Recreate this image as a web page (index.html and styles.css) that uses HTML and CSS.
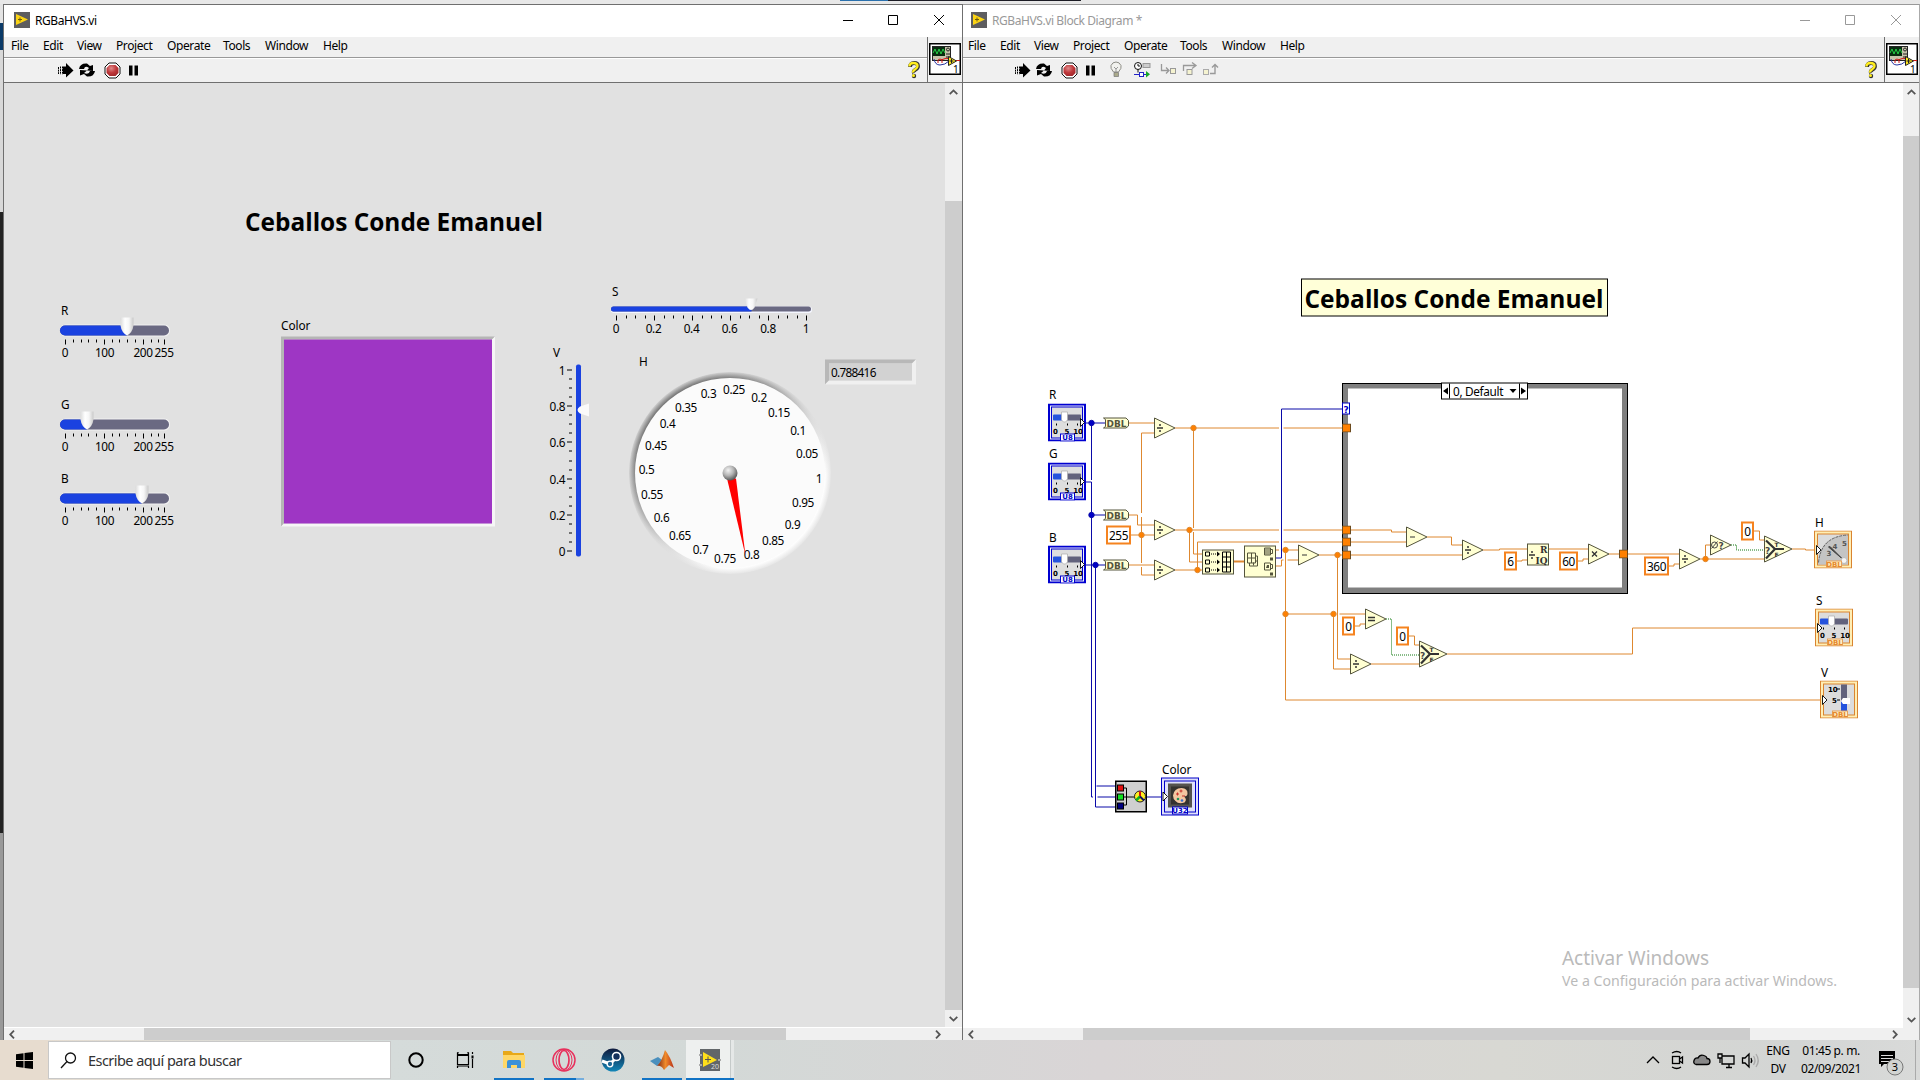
FILE: index.html
```html
<!DOCTYPE html>
<html lang="es">
<head>
<meta charset="utf-8">
<title>RGBaHVS.vi</title>
<link rel="stylesheet" href="styles.css">
</head>
<body>
<svg class="defs" width="0" height="0" aria-hidden="true">
  <defs>
    <linearGradient id="knobFill" x1="0" x2="1"><stop offset="0" stop-color="#dcdcdc"/><stop offset=".35" stop-color="#fff"/><stop offset=".65" stop-color="#f6f6f6"/><stop offset="1" stop-color="#c9c9c9"/></linearGradient>
    <linearGradient id="ringFill" x1=".15" y1=".1" x2=".85" y2=".9"><stop offset="0" stop-color="#666"/><stop offset=".3" stop-color="#989898"/><stop offset=".55" stop-color="#d8d8d8"/><stop offset=".8" stop-color="#fff"/><stop offset="1" stop-color="#fff"/></linearGradient>
    <radialGradient id="ringFade"><stop offset=".93" stop-color="#e1e1e1" stop-opacity="0"/><stop offset="1" stop-color="#e1e1e1"/></radialGradient>
    <radialGradient id="hubFill" cx=".38" cy=".32" r=".7"><stop offset="0" stop-color="#f2f2f2"/><stop offset=".5" stop-color="#b5b5b5"/><stop offset="1" stop-color="#555"/></radialGradient>
    <radialGradient id="stopFill" cx=".4" cy=".3" r=".8"><stop offset="0" stop-color="#de8b8b"/><stop offset=".5" stop-color="#c03a3d"/><stop offset="1" stop-color="#9c2428"/></radialGradient>
    <linearGradient id="steamFill" x1="0" y1="0" x2="0" y2="1"><stop offset="0" stop-color="#101a3c"/><stop offset="1" stop-color="#1387b8"/></linearGradient>
    <linearGradient id="matFill" x1="0" x2="1"><stop offset="0" stop-color="#7a2515"/><stop offset=".5" stop-color="#f08b2a"/><stop offset="1" stop-color="#b8301a"/></linearGradient>
    <pattern id="checker" width="2" height="2" patternUnits="userSpaceOnUse"><rect width="2" height="2" fill="#fff"/><rect width="1" height="1"/><rect x="1" y="1" width="1" height="1"/></pattern>

    <symbol id="appIcon" viewBox="0 0 16 16"><rect width="16" height="16" fill="#5d5d5f"/><path d="M2 2L14 7.500L2 13Z" fill="#fbd414"/><path d="M4 7.500h4M6 5.500v4" stroke="#6b5a10" stroke-width="1"/></symbol>
    <symbol id="tools" viewBox="0 0 90 24">
      <path d="M.5 9v7M2.500 8.500v8M4.500 8.500v8" stroke="#000" fill="none" stroke-dasharray="2 .6"/>
      <path d="M5 8.500h3V5l7.500 7.500L8 19.500v-3.500H5Z"/>
      <path d="M21 11q1-6 8-5.500l3 2.500 3-1v6l-6-.5 2-2.500q-4-3-5 1ZM37 13q-1 6-8 5.500l-3-2.500-4 1.500V12l7 .5-3 2.500q5 2 6-2Z"/>
      <path d="M51 5h7l4 4v7l-4 4h-7l-4-4V9Z" fill="#fff" stroke="#111"/><path d="M51.500 7h6l3 3v5l-3 3h-6l-3-3v-5Z" fill="url(#stopFill)"/>
      <path d="M71 7.500h3.500v10H71ZM76.500 7.500H80v10h-3.500Z"/>
    </symbol>
    <symbol id="help" viewBox="0 0 14 18"><path d="M3 6q0-4 4-4t4 3.200q0 2-2.500 3.500T7 12" fill="none" stroke="#333" stroke-width="3.800"/><circle cx="7" cy="15" r="2.200" fill="#333"/><path d="M2.500 5.500q0-3.500 4-3.500t4 3q0 2-2.500 3.500T6.500 11.500" fill="none" stroke="#ffee1f" stroke-width="2.400"/><circle cx="6.500" cy="14.500" r="1.500" fill="#ffee1f"/></symbol>
    <symbol id="viIcon" viewBox="0 0 32 32">
      <rect x=".75" y=".75" width="30.500" height="30.500" fill="#fff" stroke="#000" stroke-width="1.500"/>
      <rect x="3.500" y="3.500" width="18" height="14" fill="#c7c3ab" stroke="#222"/><rect x="4" y="4" width="12" height="9" fill="#082c10"/><path d="M4 10l2-4 2 5 2-5 2 5 2-5 2 4" fill="none" stroke="#25d045"/>
      <circle cx="19" cy="6.500" r="1.500" fill="none" stroke="#222"/><path d="M17 11h4M17 14h4" stroke="#222"/>
      <path d="M5 16q1 6 6 6 5 0 9-4" fill="none" stroke="#2533a0"/><path d="M9 20q-1-4 2-4t2 4M12 17q5-3 10-1M27 17.500h4" fill="none" stroke="#d01818"/>
      <path d="M19.500 13.500v9l8-4.500Z" fill="#ffe81f" stroke="#222"/><path d="M20.500 18h4M22.500 16v4" stroke="#222"/>
      <text x="24" y="29.500" class="tiny">1</text>
    </symbol>
    <symbol id="winButtons" viewBox="0 0 104 12"><path d="M0 6.500h10M45.500 1.500h9v9h-9ZM91 1l10 10M101 1L91 11" fill="none" stroke="currentColor"/></symbol>

    <symbol id="knob" viewBox="0 0 14 18" overflow="visible"><path d="M.5 0h13v8q-1 7-6.500 10Q1.500 15 .5 8Z" fill="url(#knobFill)"/></symbol>
    <symbol id="rgbSlider" viewBox="0 0 120 50" overflow="visible">
      <rect x="0" y="-1" width="110" height="12" rx="5.500" fill="#fff" opacity=".55"/><rect width="109" height="10" rx="5" fill="#6a6982"/>
      <path d="M5.500 14v5M44.500 14v5M83.500 14v5M104.500 14v5" stroke="#000"/>
      <path d="M13.500 14v3M21.500 14v3M28.500 14v3M36.500 14v3M52.500 14v3M59.500 14v3M67.500 14v3M75.500 14v3M91.500 14v3M98.500 14v3" stroke="#000"/>
      <g class="lbl mid"><text x="5" y="31">0</text><text x="44.500" y="31">100</text><text x="83" y="31">200</text><text x="104" y="31">255</text></g>
    </symbol>

    <symbol id="tri" viewBox="0 0 22 22" overflow="visible"><path d="M.5 .5v20L21 10.500Z" fill="#ffffd2" stroke="#54543c"/></symbol>
    <symbol id="div" viewBox="0 0 22 22" overflow="visible"><use href="#tri"/><path d="M3 10.500h6M5 7.500h2M5 13.500h2" stroke="#333" stroke-width="1.400"/></symbol>
    <symbol id="sub" viewBox="0 0 22 22" overflow="visible"><use href="#tri"/><path d="M4 10.500h5" stroke="#333"/></symbol>
    <symbol id="mul" viewBox="0 0 22 22" overflow="visible"><use href="#tri"/><path d="M4 8l5 5M9 8l-5 5" stroke="#333" stroke-width="1.300"/></symbol>
    <symbol id="eq" viewBox="0 0 22 22" overflow="visible"><use href="#tri"/><path d="M3 9h7M3 12h7" stroke="#333" stroke-width="1.600"/></symbol>
    <symbol id="nan" viewBox="0 0 22 22" overflow="visible"><use href="#tri"/><ellipse cx="4.500" cy="10.500" rx="3" ry="3" fill="none" stroke="#444"/><path d="M1.500 14l6-7" stroke="#444"/><text x="8.500" y="14" class="sym">?</text></symbol>
    <symbol id="sel" viewBox="0 0 28 28" overflow="visible"><path d="M.5 .5v26L28 13.500Z" fill="#ffffd2" stroke="#54543c"/><path d="M2 5l9 8.500M2 23l9-9.500M10 13.500h10" stroke="#333" stroke-width="2.200"/><text x="1" y="18" class="sym">?</text><text x="10.500" y="11" class="micro">T</text><text x="10.500" y="21" class="micro">F</text></symbol>
    <symbol id="dbl" viewBox="0 0 26 12" overflow="visible"><path d="M.5 .5H23l2.500 2.500v5.500L23 10.500H.5L2.500 9V2Z" fill="#ffffd2" stroke="#54543c"/><text x="3.500" y="9.300" class="dbl" textLength="20" lengthAdjust="spacingAndGlyphs">DBL</text></symbol>
    <symbol id="tunnel" viewBox="0 0 9 9"><rect x=".5" y=".5" width="8" height="8" fill="#ff8000" stroke="#6b4a1e"/></symbol>
    <symbol id="sliderArt" viewBox="0 0 38 38">
      <rect x="5" y="11" width="12" height="6" rx="1" fill="#2553dd"/><rect x="16" y="11" width="17" height="6" rx="1" fill="#62627c"/><path d="M13.500 8.500h6v8l-2 2h-2l-2-2Z" fill="#fff" stroke="#aaa" stroke-width=".7"/>
      <path d="M8.500 20v2M19.500 20v2M29.500 20v2" stroke="#000"/><g class="ico mid"><text x="7.500" y="30">0</text><text x="19" y="30">5</text><text x="30" y="30">10</text></g>
    </symbol>
    <symbol id="control" viewBox="0 0 38 38">
      <rect x="1" y="1" width="36" height="36" fill="#f0f0fa" stroke="#0000d0" stroke-width="2"/><rect x="3.500" y="3.500" width="31" height="31" fill="#dedede" stroke="#0000d0"/>
      <use href="#sliderArt" width="38" height="38"/>
      <path d="M32.500 15v8l4-4Z" fill="#fff" stroke="#000" stroke-width=".9"/><rect x="12.500" y="30.500" width="14" height="7" fill="#fff" stroke="#0000d0"/><text x="19.500" y="36.800" class="ico mid blue">U8</text>
    </symbol>
    <symbol id="indicator" viewBox="0 0 38 38"><rect x=".5" y=".5" width="37" height="37" fill="#ffeeb4" stroke="#d98430"/><rect x="3.500" y="3.500" width="31" height="31" fill="#dcdcdc" stroke="#d98430"/></symbol>
    <symbol id="indicatorTag" viewBox="0 0 38 38"><rect x="12.500" y="30.500" width="15" height="6" fill="#fff0c0" stroke="#e6a05c"/><text x="20" y="36.300" class="ico mid orange">DBL</text><path d="M2.500 15v9l4.500-4.500Z" fill="#fff" stroke="#000" stroke-width=".9"/></symbol>
  </defs>
</svg>

<div class="desktop">
  <div class="behind"></div>
  <main class="windows">
    <section class="window front">
      <header class="titlebar">
        <svg width="16" height="16"><use href="#appIcon"/></svg>
        <span class="title">RGBaHVS.vi</span>
        <svg class="winbtns" width="104" height="12"><use href="#winButtons"/></svg>
      </header>
      <div class="chrome">
        <div class="bars">
          <nav class="menu"><span>File</span><span>Edit</span><span>View</span><span>Project</span><span>Operate</span><span>Tools</span><span>Window</span><span>Help</span></nav>
          <div class="toolbar"><svg width="90" height="24"><use href="#tools"/></svg><svg class="help" width="14" height="18"><use href="#help"/></svg></div>
        </div>
        <div class="vi"><svg width="32" height="32"><use href="#viIcon"/></svg></div>
      </div>
      <div class="work">
        <svg class="canvas" viewBox="4 83 941 943">
          <text x="245" y="230.500" class="heading" textLength="298" lengthAdjust="spacingAndGlyphs">Ceballos Conde Emanuel</text>
          <g class="lbl"><text x="61" y="314">R</text><text x="61" y="408">G</text><text x="61" y="482">B</text><text x="281" y="329" textLength="29">Color</text><text x="612" y="295">S</text><text x="553" y="356">V</text><text x="639" y="365">H</text></g>
          <use href="#rgbSlider" x="60" y="325" width="120" height="50"/><path d="M65 325h62v10h-62a5 5 0 0 1 0-10Z" fill="#1a42e0"/><use href="#knob" x="120" y="317" width="14" height="18"/>
          <use href="#rgbSlider" x="60" y="419" width="120" height="50"/><path d="M65 419h22v10h-22a5 5 0 0 1 0-10Z" fill="#1a42e0"/><use href="#knob" x="80" y="411" width="14" height="18"/>
          <use href="#rgbSlider" x="60" y="493" width="120" height="50"/><path d="M65 493h77v10h-77a5 5 0 0 1 0-10Z" fill="#1a42e0"/><use href="#knob" x="135" y="485" width="14" height="18"/>

          <path d="M281 336h214l-3 3h-208v184l-3 3Z" fill="#b5b5b5"/><path d="M495 336v190h-214l3-3h208v-184Z" fill="#f6f6f6"/><rect x="284" y="339" width="208" height="184" fill="#9e36c4"/>

          <rect x="611" y="306" width="201" height="6.500" rx="3" fill="#f4f6ff"/><rect x="611" y="306" width="200" height="5" rx="2.500" fill="#6a6982"/><path d="M613.500 306h138v5h-138a2.500 2.500 0 0 1 0-5Z" fill="#1a42e0"/><path d="M744.500 298h13l-3 9q-3.500 5-7 0Z" fill="url(#knobFill)"/>
          <path d="M616.500 315v5M654.500 315v5M692.500 315v5M730.500 315v5M768.500 315v5M806.500 315v5M626.500 315v3M635.500 315v3M645.500 315v3M664.500 315v3M673.500 315v3M683.500 315v3M702.500 315v3M711.500 315v3M721.500 315v3M740.500 315v3M749.500 315v3M759.500 315v3M778.500 315v3M787.500 315v3M797.500 315v3" stroke="#000"/>
          <g class="lbl mid"><text x="616" y="332">0</text><text x="653.500" y="332">0.2</text><text x="691.500" y="332">0.4</text><text x="729.500" y="332">0.6</text><text x="768" y="332">0.8</text><text x="806" y="332">1</text></g>

          <rect x="576" y="364" width="5" height="192" rx="2" fill="#1a42e0"/><path d="M589 403v13l-9-3q-5-3.500 0-7Z" fill="#fafafa"/>
          <path d="M567 369.500h5M567 405.500h5M567 441.500h5M567 478.500h5M567 514.500h5M567 550.500h5M569 378.500h3M569 387.500h3M569 396.500h3M569 414.500h3M569 423.500h3M569 432.500h3M569 450.500h3M569 460.500h3M569 469.500h3M569 487.500h3M569 496.500h3M569 505.500h3M569 523.500h3M569 532.500h3M569 541.500h3" stroke="#000"/>
          <g class="lbl end"><text x="565" y="374">1</text><text x="565" y="410">0.8</text><text x="565" y="446">0.6</text><text x="565" y="483">0.4</text><text x="565" y="519">0.2</text><text x="565" y="555">0</text></g>

          <path d="M825 359h91l-4 4h-83v17l-4 4Z" fill="#b8b8b8"/><path d="M916 359v25h-91l4-4h83v-17Z" fill="#f0f0f0"/><rect x="829" y="363" width="83" height="17" fill="#d2d2d2"/><text x="831" y="376" class="lbl" textLength="45">0.788416</text>

          <circle cx="730" cy="472.500" r="101" fill="url(#ringFill)"/><circle cx="730" cy="472.500" r="102" fill="url(#ringFade)"/><circle cx="730" cy="472.500" r="95" fill="#fbfbfb"/>
          <g class="lbl mid"><text x="734" y="393">0.25</text><text x="708.500" y="397">0.3</text><text x="759" y="401">0.2</text><text x="686" y="411">0.35</text><text x="779" y="416">0.15</text><text x="667.500" y="427">0.4</text><text x="798" y="434">0.1</text><text x="656" y="449">0.45</text><text x="807" y="457">0.05</text><text x="646.500" y="473">0.5</text><text x="819" y="482">1</text><text x="652" y="498">0.55</text><text x="803" y="506">0.95</text><text x="661.500" y="521">0.6</text><text x="792.500" y="528">0.9</text><text x="680" y="539">0.65</text><text x="773" y="544">0.85</text><text x="700.500" y="553.500">0.7</text><text x="751.500" y="558">0.8</text><text x="725" y="562">0.75</text></g>
          <path d="M727 478h9L745.500 555Z" fill="#f00"/><circle cx="730" cy="472.500" r="7.500" fill="url(#hubFill)"/>
        </svg>
        <div class="vscroll"><svg width="9" height="6" viewBox="0 0 9 6"><path d="M.7 5.200L4.500 1.400l3.800 3.800"/></svg><i></i><svg width="9" height="6" viewBox="0 0 9 6"><path d="M.7 .8l3.800 3.800L8.300 .8"/></svg></div>
      </div>
      <div class="hscroll"><svg width="6" height="9" viewBox="0 0 6 9"><path d="M5 .7L1.200 4.500 5 8.300"/></svg><i></i><svg width="6" height="9" viewBox="0 0 6 9"><path d="M1 .7l3.800 3.800L1 8.300"/></svg></div>
    </section>

    <section class="window diagram">
      <header class="titlebar">
        <svg width="16" height="16"><use href="#appIcon"/></svg>
        <span class="title">RGBaHVS.vi Block Diagram *</span>
        <svg class="winbtns" width="104" height="12"><use href="#winButtons"/></svg>
      </header>
      <div class="chrome">
        <div class="bars">
          <nav class="menu"><span>File</span><span>Edit</span><span>View</span><span>Project</span><span>Operate</span><span>Tools</span><span>Window</span><span>Help</span></nav>
          <div class="toolbar"><svg width="90" height="24"><use href="#tools"/></svg>
            <svg width="110" height="18" viewBox="0 0 110 18">
              <path d="M3.500 11Q0 7 1 4.500 2.500 1 6 1t5 3.500Q12 7 8.500 11Z" fill="#f2f2ee" stroke="#8d8d86"/><path d="M4 6l2 2 2-2M6 8v3" fill="none" stroke="#999"/><path d="M4 11.500h4.500v4H4Z" fill="#aaa98a" stroke="#777" stroke-width=".7"/>
              <circle cx="28" cy="5" r="3.500" fill="#fff" stroke="#111"/><path d="M28 3v2h2M28 8.500v3" stroke="#111" fill="none"/><rect x="33" y="2.500" width="7" height="4" fill="#ccc" stroke="#999"/><path d="M24 13.500h13" stroke="#2222c8"/><rect x="29.500" y="11.500" width="4" height="4" fill="#fff" stroke="#2222c8"/><path d="M36 10v6.500l4-3.300Z" fill="#18a828"/>
              <path d="M51.500 3v6.500h7M56 6.500l3 3-3 3" fill="none" stroke="#999" stroke-width="1.300"/><rect x="60.500" y="7.500" width="5" height="5" fill="#f5f3d0" stroke="#999"/>
              <path d="M73.500 10V4.500h12M82 1.500l4 3-4 3" fill="none" stroke="#999" stroke-width="1.300"/><rect x="77" y="8.500" width="5" height="5" fill="#f5f3d0" stroke="#999"/>
              <rect x="93.500" y="8.500" width="5" height="5" fill="#f5f3d0" stroke="#aaa"/><path d="M100 12.500h5V4M102 6.500l3-3 3 3" fill="none" stroke="#999" stroke-width="1.400"/>
            </svg>
            <svg class="help" width="14" height="18"><use href="#help"/></svg></div>
        </div>
        <div class="vi"><svg width="32" height="32"><use href="#viIcon"/></svg></div>
      </div>
      <div class="work">
        <svg class="canvas" viewBox="963 83 940 944">
          <rect x="1301.500" y="278.500" width="306" height="37" fill="#ffffd8" stroke="#000"/><text x="1304.500" y="307.500" class="heading" textLength="299" lengthAdjust="spacingAndGlyphs">Ceballos Conde Emanuel</text>

          <g shape-rendering="crispEdges"><rect x="1342" y="382" width="286" height="211" fill="url(#checker)"/><rect x="1342.500" y="382.500" width="285" height="210" fill="none" stroke="#000"/></g><rect x="1348" y="388" width="274" height="199" fill="#fff"/>
          <rect x="1441.500" y="382.500" width="86" height="16" fill="#fff" stroke="#000"/><path d="M1449.500 383v15M1519.500 383v15" stroke="#000"/><path d="M1448 387v7l-5-3.500ZM1521 387v7l5-3.500ZM1509.500 388.500h7l-3.500 4Z"/><text x="1453" y="395" class="lbl" textLength="50">0, Default</text>

          <g class="wire uint">
            <path d="M1084 422.500h22M1091.500 422.500v57M1091.500 484v301.500M1096.500 785.500h19M1084 481.500h7.500v33h14M1091.500 785v11.500h1.500M1097.500 796.500h18M1084 564.500h22M1095.500 564.500v242h20M1147 796.500h17M1276 557.500h5.500v-149h61"/>
            <g class="dots"><circle cx="1091.500" cy="422.500" r="2.700"/><circle cx="1091.500" cy="514.500" r="2.700"/><circle cx="1095.500" cy="564.500" r="2.700"/></g>
          </g>
          <g class="wire dbl-wire">
            <path d="M1129 422.500h26M1155 432.500h-13.500V512.500M1141.500 516.500v46M1141.500 566.500v8h13M1175 427.500h104M1283.500 427.500h60M1193.500 427.500v100M1193.500 531.500v22h9"/>
            <path d="M1129 514.500h8.500v10h17M1131 534.500h24M1175 529.500h104M1283.500 529.500h60M1189.500 529.500v32h13M1129 564.500h26M1175 569.500h27M1197.500 569.500v-28h81.500M1283.500 541.500h60"/>
            <path d="M1234 561h10" stroke-width="2"/>
            <path d="M1276 549.500h3M1283.500 549.500h15M1276 565.500h5.500v-6h2M1287.500 559.500h11M1285.500 549.500v150h535M1319 554.500h24M1337.500 554.500v104h13M1285.500 613.500h50M1339.500 613.500h26M1333.500 613.500v55h17"/>
            <path d="M1355 625.500h5v-2h5M1371 663.500h48M1409 635.500h5.500v9h5M1447 653.500h185.500v-26H1818"/>
            <path d="M1351 529.500h40.500v2h15M1351 541.500h55M1427 536.500h24.500v8h11M1351 554.500h111M1483 549.500h16.500v-1H1527M1517 560.500h5v-1h5M1549 548.500h39M1578 560.500h5v-2h5M1609 553.500h70M1669 565.500h5v-2h5M1700 558.500h64M1705.500 558.500v-14h5M1754 530.500h5.500v9h5M1792 548.500h13.500v1h12"/>
            <g class="dots"><circle cx="1193.500" cy="427.500" r="2.700"/><circle cx="1141.500" cy="534.500" r="2.700"/><circle cx="1189.500" cy="529.500" r="2.700"/><circle cx="1197.500" cy="569.500" r="2.700"/><circle cx="1285.500" cy="549.500" r="2.700"/><circle cx="1337.500" cy="554.500" r="2.700"/><circle cx="1285.500" cy="613.500" r="2.700"/><circle cx="1333.500" cy="613.500" r="2.700"/><circle cx="1705.500" cy="558.500" r="2.700"/></g>
          </g>
          <path class="bool" d="M1386 618.500h5.500v36h28M1731 544.500h5.500v5h28"/>

          <use href="#tunnel" x="1342" y="423" width="9" height="9"/><use href="#tunnel" x="1342" y="525" width="9" height="9"/><use href="#tunnel" x="1342" y="537" width="9" height="9"/><use href="#tunnel" x="1342" y="550" width="9" height="9"/><use href="#tunnel" x="1619" y="549" width="9" height="9"/>
          <rect x="1342.500" y="402.500" width="7" height="11" fill="#fff" stroke="#0000c0"/><text x="1346" y="412" class="sym mid blue">?</text>

          <use href="#dbl" x="1103" y="417" width="26" height="12"/><use href="#dbl" x="1103" y="509" width="26" height="12"/><use href="#dbl" x="1103" y="559" width="26" height="12"/>
          <use href="#div" x="1154" y="417" width="22" height="22"/><use href="#div" x="1154" y="519" width="22" height="22"/><use href="#div" x="1154" y="559" width="22" height="22"/><use href="#sub" x="1298" y="544" width="22" height="22"/><use href="#sub" x="1406" y="526" width="22" height="22"/><use href="#div" x="1462" y="539" width="22" height="22"/><use href="#mul" x="1588" y="543" width="22" height="22"/><use href="#div" x="1679" y="548" width="22" height="22"/><use href="#nan" x="1710" y="534" width="22" height="22"/><use href="#eq" x="1365" y="608" width="22" height="22"/><use href="#div" x="1350" y="653" width="22" height="22"/>
          <use href="#sel" x="1419" y="640" width="28" height="28"/><use href="#sel" x="1764" y="535" width="28" height="28"/>

          <g class="const"><rect x="1107" y="526" width="23" height="17"/><rect x="1505" y="552" width="11" height="17"/><rect x="1560" y="552" width="17" height="17"/><rect x="1645" y="557" width="23" height="17"/><rect x="1742" y="522" width="11" height="17"/><rect x="1343" y="617" width="11" height="17"/><rect x="1397" y="627" width="11" height="17"/></g>
          <g class="lbl mid"><text x="1118.500" y="539">255</text><text x="1510.500" y="565">6</text><text x="1568.500" y="565">60</text><text x="1656.500" y="570">360</text><text x="1747.500" y="535">0</text><text x="1348.500" y="630">0</text><text x="1402.500" y="640">0</text></g>

          <g class="node"><rect x="1202.500" y="549.500" width="31" height="24"/><rect x="1244.500" y="545.500" width="31" height="31"/><rect x="1527.500" y="543.500" width="21" height="21"/></g>
          <path d="M1205.500 551.500h4v4h-4ZM1205.500 559.500h4v4h-4ZM1205.500 567.500h4v4h-4ZM1222.500 551.500h8v20h-8ZM1226.500 551.500v20M1222.500 556.500h8M1222.500 561.500h8M1222.500 566.500h8" fill="none" stroke="#000"/><path d="M1211 553.500h6M1211 561.500h6M1211 569.500h6" stroke="#000" stroke-dasharray="1 1"/><path d="M1217 551v5l3-2.500ZM1217 559v5l3-2.500ZM1217 567v5l3-2.500Z"/>
          <path d="M1247.500 552.500h8v10h-8ZM1251.500 552.500v10M1247.500 557.500h8M1249.500 562.500v3h8v-10h-2M1253.500 562v3M1255 560.500h2" fill="none" stroke="#54543c"/><path d="M1264.500 547.500h6v7h-6ZM1264.500 562.500h6v7h-6ZM1270.500 549h2v4h-2M1270.500 564h2v4h-2" fill="none" stroke="#54543c"/><path d="M1265 548h5v6h-5Z" fill="#54543c" opacity=".55"/><path d="M1267 564.500h2v3h-3M1270 557h3v3h-3ZM1270 572h3v3h-3Z" fill="#54543c"/>
          <path d="M1529 554.500h6M1531 551.500h2M1531 557.500h2" stroke="#333" stroke-width="1.300"/><text x="1540" y="552.500" class="iq">R</text><text x="1535.500" y="563.500" class="iq" textLength="12" lengthAdjust="spacingAndGlyphs">IQ</text>

          <g class="lbl"><text x="1049" y="398">R</text><text x="1049" y="457">G</text><text x="1049" y="541">B</text><text x="1815" y="526">H</text><text x="1816" y="604">S</text><text x="1821" y="676">V</text><text x="1162" y="773" textLength="29">Color</text></g>
          <use href="#control" x="1048" y="403" width="38" height="38"/><use href="#control" x="1048" y="462" width="38" height="38"/><use href="#control" x="1048" y="545" width="38" height="38"/>

          <use href="#indicator" x="1814" y="530" width="38" height="38"/>
          <path d="M1818 562Q1820 535 1848 534.500V564H1818Z" fill="#c4c4c4"/><path d="M1818.500 562Q1821 536 1848 534.500" fill="none" stroke="#666" stroke-dasharray="3 1"/><path d="M1828.500 546.500l14 12-12.500-12.500Z" fill="#444" stroke="#444"/><circle cx="1844" cy="560" r="3" fill="#f5f5f5" stroke="#bbb"/><g class="ico mid dim"><text x="1829" y="555">3</text><text x="1835" y="548">4</text><text x="1844.500" y="545">5</text></g>
          <use href="#indicatorTag" x="1814" y="530" width="38" height="38"/>
          <use href="#indicator" x="1815" y="608" width="38" height="38"/><use href="#sliderArt" x="1815" y="607" width="38" height="38"/><use href="#indicatorTag" x="1815" y="608" width="38" height="38"/>
          <use href="#indicator" x="1820" y="680" width="38" height="38"/><rect x="1841" y="684" width="6" height="17" fill="#62627c"/><rect x="1841" y="701" width="6" height="10" fill="#2553dd"/><path d="M1850 697.500v6h-7l-2-3 2-3Z" fill="#fff"/><g class="ico"><text x="1828" y="691">10</text><text x="1832" y="702">5</text></g><path d="M1837 688.500h3M1837 699.500h3" stroke="#000"/><use href="#indicatorTag" x="1820" y="680" width="38" height="38"/>

          <rect x="1115.750" y="780.750" width="30.500" height="30.500" fill="#cfcfcf" stroke="#000" stroke-width="1.500"/><path d="M1123 787.500h3.500v17h-3.500M1123 796.500h12" fill="none" stroke="#000"/><g stroke="#000"><rect x="1117.500" y="784.500" width="6" height="6" fill="#e01010"/><rect x="1117.500" y="793.500" width="6" height="6" fill="#10e020"/><rect x="1117.500" y="802.500" width="6" height="6" fill="#000080"/></g>
          <circle cx="1140" cy="796" r="5.500" fill="#ffee20" stroke="#222"/><path d="M1140 796v-5.500" stroke="#d01010" stroke-width="2"/><path d="M1140 796l-4 4" stroke="#12b020" stroke-width="2.500"/><path d="M1140 796l4 4" stroke="#101060" stroke-width="2"/>
          <rect x="1161.500" y="777.500" width="37" height="37" fill="#dfe0fa" stroke="#0000c8"/><rect x="1164.500" y="780.500" width="31" height="31" fill="#dfe0fa" stroke="#0000c8"/><rect x="1168" y="783" width="24" height="24" fill="#55534f"/><rect x="1171" y="786" width="18" height="18" fill="#34322f"/>
          <path d="M1173 795q1-7.500 8.500-7.500 6.500 .5 6 6-.5 2.500-3.500 2.500 3.500 3 .5 6-6 2-9-1.500-2.500-2-2.500-5.500Z" fill="#f3c6a0"/><path d="M1176 793.500h3M1177.500 792v3M1179.500 790.500h3M1181 789v3M1182 795.500h3" stroke="#c8302a"/><circle cx="1178" cy="798.500" r="1.300" fill="#23955a"/><circle cx="1182" cy="800" r="1.300" fill="#346fd0"/>
          <path d="M1163 791.500v9l4.500-4.500Z" fill="#fff" stroke="#000" stroke-width=".9"/><rect x="1172.500" y="806.500" width="15" height="7" fill="#fff" stroke="#0000c8"/><text x="1180" y="812.800" class="ico mid blue">U32</text>

          <g class="watermark"><text x="1562" y="964.500" font-size="20" textLength="147" lengthAdjust="spacingAndGlyphs">Activar Windows</text><text x="1562" y="985.500" font-size="15" textLength="275" lengthAdjust="spacingAndGlyphs">Ve a Configuración para activar Windows.</text></g>
        </svg>
        <div class="vscroll"><svg width="9" height="6" viewBox="0 0 9 6"><path d="M.7 5.200L4.500 1.400l3.800 3.800"/></svg><i></i><svg width="9" height="6" viewBox="0 0 9 6"><path d="M.7 .8l3.800 3.800L8.300 .8"/></svg></div>
      </div>
      <div class="hscroll"><svg width="6" height="9" viewBox="0 0 6 9"><path d="M5 .7L1.200 4.500 5 8.300"/></svg><i></i><svg width="6" height="9" viewBox="0 0 6 9"><path d="M1 .7l3.800 3.800L1 8.300"/></svg></div>
    </section>
  </main>

  <footer class="taskbar">
    <div class="start"><svg width="17" height="17" viewBox="0 0 17 17"><path d="M0 2.300L7.500 1.300V8H0ZM8.500 1.100L17 0v8H8.500ZM0 9h7.500v6.700L0 14.700ZM8.500 9H17v8l-8.500-1.100Z"/></svg></div>
    <div class="search"><svg width="17" height="17" viewBox="0 0 17 17"><circle cx="10.500" cy="6" r="5" fill="none" stroke="#111" stroke-width="1.300"/><path d="M7 9.500L1 16" stroke="#111" stroke-width="1.300"/></svg><span>Escribe aquí para buscar</span></div>
    <div class="apps">
      <span class="app"><svg width="18" height="18" viewBox="0 0 18 18"><circle cx="9" cy="9" r="6.700" fill="none" stroke="#000" stroke-width="2"/></svg></span>
      <span class="app"><svg width="18" height="18" viewBox="0 0 18 18"><path d="M2 2.500V1M12 2.500V1M1.500 4.500h11v9h-11ZM1.500 1.500v2h11v-2M1.500 17v-2h11v2M16.500 1v2M16.500 8v9" fill="none" stroke="#000" stroke-width="1.200"/><rect x="15.500" y="4.500" width="2" height="3"/></svg></span>
      <span class="app run"><svg width="22" height="20" viewBox="0 0 22 20"><path d="M0 1h8l2 2h11v15H0Z" fill="#e8a818"/><path d="M0 5h22v13H0Z" fill="#ffd767"/><path d="M4 18v-6q0-2 2-2h10q2 0 2 2v6h-4v-3H8v3Z" fill="#3d91d8"/></svg></span>
      <span class="app run multi"><svg width="24" height="24" viewBox="0 0 24 24"><g fill="none" stroke="#e8305c"><circle cx="12" cy="12" r="11" stroke-width="1.500"/><ellipse cx="12" cy="12" rx="5" ry="9.500" stroke-width="1.700"/><ellipse cx="12" cy="12" rx="8" ry="10.500"/></g></svg></span>
      <span class="app"><svg width="24" height="24" viewBox="0 0 24 24"><circle cx="12" cy="12" r="11.500" fill="url(#steamFill)"/><path d="M1 13l8 3 7-7" fill="none" stroke="#fff" stroke-width="3"/><circle cx="15.500" cy="8.500" r="4" fill="#15315c" stroke="#fff" stroke-width="1.600"/><circle cx="9" cy="16" r="2.800" fill="#1c6796" stroke="#fff" stroke-width="1.300"/></svg></span>
      <span class="app run"><svg width="24" height="22" viewBox="0 0 24 22"><path d="M0 12l8-4 4 3-5 6Z" fill="#4a8fbd"/><path d="M7 17q5-5 8-16 5 6 9 18l-5-3-5 5q-3-5-7-4Z" fill="url(#matFill)"/></svg></span>
      <span class="app run active"><svg width="22" height="22" viewBox="0 0 22 22"><path d="M1 0h20v22H1Z" fill="#626669"/><path d="M0 6h3M0 16h3M19 11h3" stroke="#aaa" stroke-width="2"/><path d="M4 3l14 8L4 18Z" fill="#ffe01a"/><path d="M6 10.500h6M9 7.500v6" stroke="#555"/><text x="12" y="20" class="badge20">20</text></svg></span>
    </div>
    <div class="tray">
      <svg width="118" height="20" viewBox="0 0 118 20" fill="none" stroke="#000" stroke-width="1.300"><path d="M1 13l6-6 6 6"/><rect x="26.500" y="6.500" width="7" height="7"/><path d="M33.500 9l3-2v6l-3-2M26 3q5-3 9 0M26 17q5 3 9 0"/><path d="M50 14.500q-3-1-2-4 1-3 4-2.500 2-4 6-2.500 3 1 3 3 3 0 3 3t-3 3Z" fill="#888"/><path d="M76 6h12v8H76ZM80 17.500h6M83 14v3.500M72 4h4v4h-4ZM74 8v5" /><path d="M96.500 8v5h2.500l4 4V4l-4 4ZM105 8q1.500 2.500 0 5" /><path d="M107.500 6q3 4.500 0 9M110 4q4.500 6.500 0 13" stroke="#aaa"/></svg>
      <div class="stack lang"><span>ENG</span><span>DV</span></div>
      <div class="stack clock"><span>01:45 p. m.</span><span>02/09/2021</span></div>
      <svg class="notes" width="26" height="26" viewBox="0 0 26 26"><path d="M0 0h16v13H5l-3 3v-3H0Z"/><path d="M2 4.500h12M2 7.500h12M2 10.500h8" stroke="#ddd"/><circle cx="16" cy="16" r="8" fill="#d2d4d2" stroke="#777"/><text x="16" y="20" class="count">3</text></svg>
    </div>
  </footer>
</div>
</body>
</html>
```
FILE: styles.css
```css
* { box-sizing: border-box; }
body { margin: 0; font-family: "Noto Sans", "Open Sans", sans-serif; font-size: 12px; color: #000; overflow: hidden; }
svg { display: block; flex: none; }
.defs { position: absolute; }

.desktop { width: 1920px; height: 1080px; display: grid; grid-template-rows: 4px 1036px 40px; background: #dcdcdc; }
.behind { background: linear-gradient(90deg, transparent 840px, #2a70ad 840px, #2a70ad 888px, #1c1c24 888px, #1c1c24 1081px, transparent 1081px) 0 0 / 100% 1px no-repeat, #e8e8e8; }
.windows { display: grid; grid-template-columns: 960px 957px; padding-left: 3px; background: linear-gradient(#e4e4e4 19px, #0b3a68 19px, #0b3a68 46px, #d8d8d8 46px, #d8d8d8 208px, #222 208px, #222 80%, #999 80%); }

.window { display: grid; grid-template-rows: 32px 46px minmax(0, 1fr) 13px; border-top: 1px solid #6f6f6f; background: #f0f0f0; }
.front { border-left: 1px solid #6f6f6f; border-right: 1px solid #6f6f6f; }
.diagram { border-right: 1px solid #aaa; border-top-color: #999; }

.titlebar { display: flex; align-items: center; padding: 0 18px 2px 10px; background: #fff; }
.title { margin-left: 5px; letter-spacing: -.42px; }
.diagram .title { color: #999; }
.diagram .titlebar { padding: 0 18px 2px 8px; color: #999; }
.winbtns { margin-left: auto; margin-right: -3px; }

.chrome { display: grid; grid-template-columns: minmax(0, 1fr) 35px; border-bottom: 1px solid #6f6f6f; }
.bars { display: grid; grid-template-rows: 21px 24px; }
.menu { display: grid; grid-template-columns: 32px 34px 39px 51px 56px 42px 58px 30px; align-items: center; padding-left: 7px; border-bottom: 1px solid #999; letter-spacing: -.4px; }
.menu span { line-height: 18px; margin-top: -2px; }
.diagram .menu { padding-left: 5px; }
.toolbar { display: flex; align-items: center; padding: 0 6px 2px 54px; border-top: 1px solid #fff; gap: 5px; }
.diagram .toolbar { padding-left: 52px; }
.toolbar .help { margin-left: auto; }
.vi { display: flex; align-items: center; padding: 0 0 1px 1px; border-left: 1px solid #6f6f6f; }

.work { display: grid; grid-template-columns: minmax(0, 1fr) 16px; }
.front .work { grid-template-columns: minmax(0, 1fr) 17px; border-bottom: 1px solid #fff; }
.canvas { width: 100%; height: 100%; background: #fff; }
.front .canvas { background: #e1e1e1; }

.vscroll { display: grid; grid-template-rows: 118px 809px 1fr; justify-items: center; }
.diagram .vscroll { grid-template-rows: 53px 852px 1fr; }
.vscroll i, .hscroll i { background: #cdcdcd; width: 100%; height: 100%; }
.vscroll svg { margin-top: 6px; }
.vscroll svg:last-child { align-self: end; margin-bottom: 5px; }
.vscroll path, .hscroll path { fill: none; stroke: #555; stroke-width: 1.800; }
.hscroll { display: grid; grid-template-columns: 140px 642px 1fr; align-items: center; }
.hscroll svg { margin-left: 5px; }
.hscroll svg:last-child { justify-self: end; margin-right: 21px; }
.diagram .hscroll { grid-template-columns: 120px 667px 1fr; }

.lbl { font-size: 11.800px; letter-spacing: -.4px; }
.mid { text-anchor: middle; }
.end { text-anchor: end; }
.heading { font-family: "Open Sans", "Noto Sans", sans-serif; font-size: 25px; font-weight: 700; }
.tiny { font-size: 10px; }
.sym { font: 700 9px "DejaVu Sans", sans-serif; fill: #444; }
.micro { font: 700 6px "DejaVu Sans", sans-serif; fill: #333; }
.dbl { font: 700 9px "DejaVu Sans", sans-serif; fill: #54543c; }
.iq { font: 700 9px "DejaVu Serif", serif; fill: #333; }
.ico { font: 700 7px "DejaVu Sans", sans-serif; }
.dim { fill: #555; }
.blue { fill: #0000c8; }
.orange { fill: #e6892e; }
.wire { fill: none; stroke-width: 1; }
.uint { stroke: #0a0aa8; }
.uint .dots { fill: #0000c8; }
.dbl-wire { stroke: #de8830; }
.dbl-wire .dots { fill: #ff8000; }
.bool { fill: none; stroke: #137a13; stroke-dasharray: 1 1; }
.const rect { fill: #fff; stroke: #f5831f; stroke-width: 2; }
.node rect { fill: #ffffd2; stroke: #54543c; }
.watermark { fill: #bababa; }

.taskbar { display: flex; background: linear-gradient(90deg, #e7ddd0 0, #d5dbda 390px, #d3d9d7 700px, #d9d5d6 1100px, #d8d8d3 1500px, #d3d5d4 1800px, #d9dad9); }
.start { width: 48px; display: flex; align-items: center; justify-content: center; background: #e7dccf; }
.search { width: 343px; margin: 1px 0; display: flex; align-items: center; gap: 11px; padding-left: 11px; background: #fff; border: 1px solid #c8c8c8; font-size: 14.500px; letter-spacing: -.55px; color: #333; white-space: nowrap; }
.apps { display: flex; gap: 1px; padding-left: 1px; }
.app { width: 48.200px; display: flex; align-items: center; justify-content: center; }
.app.run { background: linear-gradient(#1173c5, #1173c5) center bottom / 40px 2px no-repeat; }
.app.multi { background: linear-gradient(90deg, #1173c5 32px, #75aede 32px) center bottom / 40px 2px no-repeat; }
.app.active { margin-left: -1px; background: linear-gradient(#1173c5, #1173c5) center bottom / 48px 2px no-repeat, linear-gradient(90deg, #eef0ef 44px, #c5cac9 44px, #c5cac9 45px, #e5e8e7 45px); }
.badge20 { font-size: 7px; fill: #ddd; }
.tray { margin-left: auto; display: flex; align-items: center; padding-right: 10px; margin-right: 4px; border-right: 1px solid #aaa; }
.stack { display: grid; grid-template-rows: 18px 18px; align-items: center; text-align: center; font-size: 12px; letter-spacing: -.4px; white-space: nowrap; margin-top: -2px; }
.lang { width: 28px; }
.clock { width: 62px; margin-left: 8px; margin-right: 17px; }
.notes { margin-top: 8px; }
.count { font-size: 11px; text-anchor: middle; }
```
